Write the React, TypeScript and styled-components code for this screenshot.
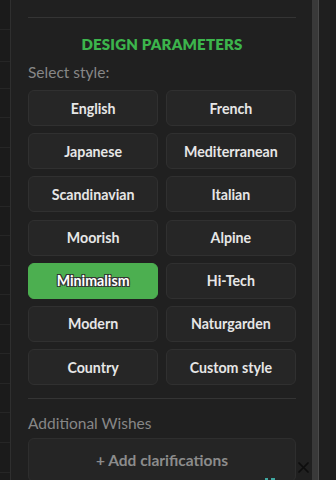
import styled, { createGlobalStyle } from 'styled-components';

const GlobalStyle = createGlobalStyle`
  html, body {
    margin: 0;
    padding: 0;
    background: #1c1c1c;
    overflow: hidden;
  }
  * {
    box-sizing: border-box;
  }
`;

const STYLES = [
  'English',
  'French',
  'Japanese',
  'Mediterranean',
  'Scandinavian',
  'Italian',
  'Moorish',
  'Alpine',
  'Minimalism',
  'Hi-Tech',
  'Modern',
  'Naturgarden',
  'Country',
  'Custom style',
];

const Screen = styled.div`
  display: flex;
  width: 336px;
  height: 480px;
  overflow: hidden;
  font-family: Lato, 'Noto Sans', sans-serif;
`;

const SideList = styled.div`
  display: flex;
  flex-direction: column;
  width: 11px;
  flex-shrink: 0;
  background: #1b1b1b;
  border-right: 1px solid #2f2f2f;
`;

const SideRow = styled.div<{ $h: number }>`
  height: ${({ $h }) => $h}px;
  flex-shrink: 0;
  border-bottom: 1px solid #262626;
`;

const Panel = styled.div`
  position: relative;
  flex: 1;
  display: flex;
  flex-direction: column;
  padding: 17px 16px 0 17px;
  background: #202020;
`;

const Divider = styled.div<{ $gap?: number }>`
  height: 1px;
  flex-shrink: 0;
  margin-top: ${({ $gap }) => $gap ?? 0}px;
  background: #343434;
`;

const Title = styled.h2`
  margin: 16px 0 0;
  font-size: 15px;
  line-height: 20px;
  font-weight: 800;
  letter-spacing: 0.2px;
  text-align: center;
  text-transform: uppercase;
  color: #3cb54c;
`;

const Label = styled.div<{ $gap: number }>`
  margin-top: ${({ $gap }) => $gap}px;
  font-size: 15.5px;
  line-height: 20px;
  color: #878787;
`;

const Grid = styled.div`
  display: grid;
  grid-template-columns: 1fr 1fr;
  grid-auto-rows: 36px;
  column-gap: 7.5px;
  row-gap: 7.2px;
  margin-top: 8px;
`;

const StyleButton = styled.button<{ $active?: boolean }>`
  display: flex;
  align-items: center;
  justify-content: center;
  padding: 0;
  border-radius: 6px;
  border: 1px solid ${({ $active }) => ($active ? '#4caf50' : '#303030')};
  background: ${({ $active }) => ($active ? '#4caf50' : '#262626')};
  color: ${({ $active }) => ($active ? '#ffffff' : '#e6e6e6')};
  font-family: Lato, 'Noto Sans', sans-serif;
  font-size: 14.2px;
  font-weight: 700;
  text-shadow: ${({ $active }) =>
    $active ? '1px 1px 0 #333, -1px -1px 0 #333, 1px -1px 0 #333, -1px 1px 0 #333' : 'none'};
`;

const WishBox = styled.div`
  display: flex;
  align-items: center;
  justify-content: center;
  height: 44px;
  margin-top: 5px;
  flex-shrink: 0;
  border-radius: 6px;
  border: 1px solid #2e2e2e;
  background: #252525;
  color: #8c8c8c;
  font-size: 15.5px;
  font-weight: 700;
`;

const CloseMark = styled.svg`
  position: absolute;
  right: 3px;
  bottom: 7px;
  width: 11px;
  height: 11px;
`;

const TealPeek = styled.svg`
  position: absolute;
  left: 253px;
  bottom: 0;
  width: 12px;
  height: 3px;
`;

const Scrollbar = styled.div`
  width: 7px;
  flex-shrink: 0;
  background: #393939;
  border-right: 1px solid #4a4a4a;
`;

const Gutter = styled.div`
  width: 17px;
  flex-shrink: 0;
  background: #1f1f1f;
`;

const rows = [30, 32, 27, 29, 30, 29, 30, 29, 30, 29, 30, 29, 30, 29, 30, 30, 30];

const App = () => (
  <>
    <GlobalStyle />
    <Screen>
      <SideList>
        {rows.map((h, i) => (
          <SideRow key={i} $h={h} />
        ))}
      </SideList>
      <Panel>
        <Divider />
        <Title>Design Parameters</Title>
        <Label $gap={8}>Select style:</Label>
        <Grid>
          {STYLES.map((name) => (
            <StyleButton key={name} $active={name === 'Minimalism'}>
              {name}
            </StyleButton>
          ))}
        </Grid>
        <Divider $gap={13} />
        <Label $gap={14}>Additional Wishes</Label>
        <WishBox>+ Add clarifications</WishBox>
        <CloseMark viewBox="0 0 11 11">
          <path d="M1 1 L10 10 M10 1 L1 10" stroke="#0d0d0d" strokeWidth="1.7" strokeLinecap="round" />
        </CloseMark>
        <TealPeek viewBox="0 0 12 3">
          <rect x="1" y="1" width="3" height="2" fill="#3fa7a0" />
          <rect x="7" y="1" width="4" height="2" fill="#3fa7a0" />
        </TealPeek>
      </Panel>
      <Scrollbar />
      <Gutter />
    </Screen>
  </>
);

export default App;
